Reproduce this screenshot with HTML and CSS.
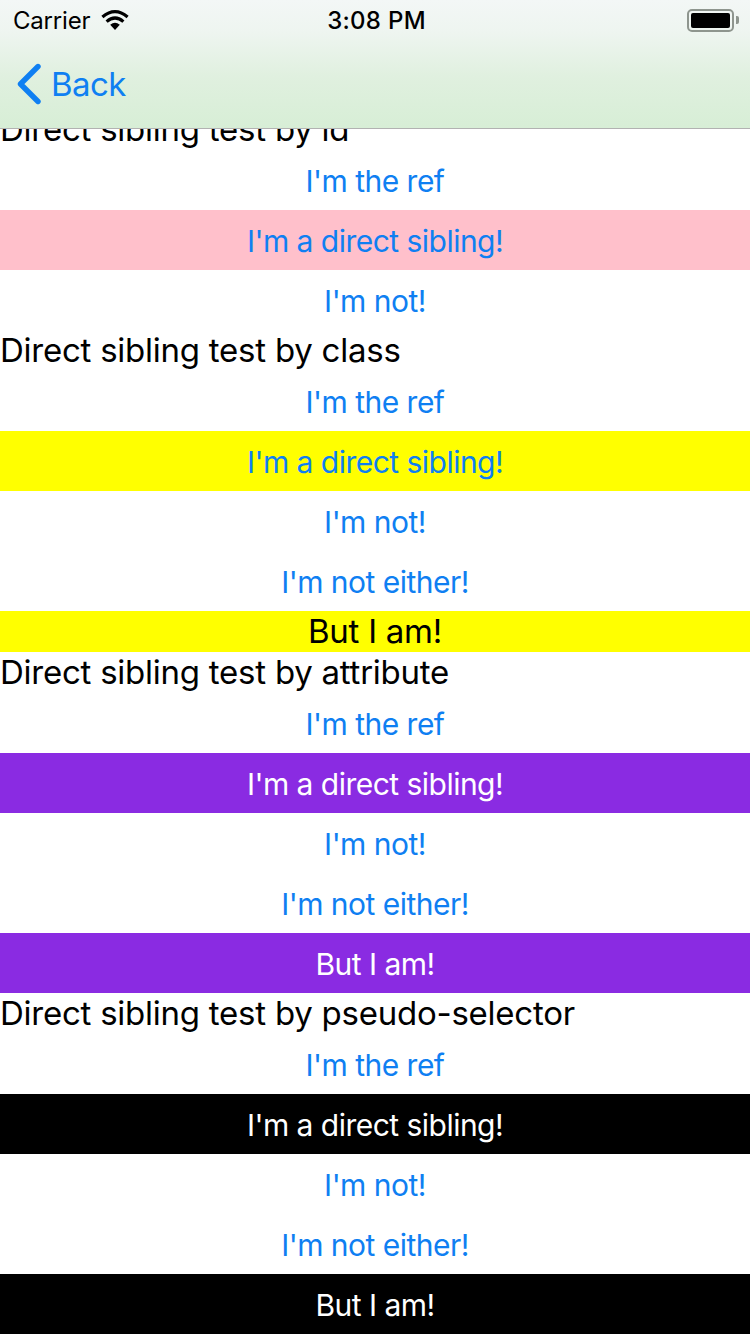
FILE: index.html
```html
<!DOCTYPE html>
<html lang="en">
<head>
    <meta charset="UTF-8">
    <meta name="viewport" content="width=device-width, initial-scale=1.0">
    <title>Direct sibling tests</title>
    <link rel="stylesheet" href="styles.css">
</head>
<body>
    <header class="nav">
        <div class="status">
            <div class="status-left">
                <span class="carrier">Carrier</span>
                <svg class="wifi" width="30" height="22" viewBox="0 0 30 22">
                    <path d="M15 21 L10.2 15.8 Q15 11.6 19.8 15.8 Z" fill="#000"/>
                    <path d="M6.6 12.6 Q15 5.4 23.4 12.6" fill="none" stroke="#000" stroke-width="3.2"/>
                    <path d="M2.4 8 Q15 -2.6 27.6 8" fill="none" stroke="#000" stroke-width="3.2"/>
                </svg>
            </div>
            <span class="time">3:08 PM</span>
            <div class="battery">
                <div class="battery-body"><div class="battery-fill"></div></div>
                <div class="battery-tip"></div>
            </div>
        </div>
        <div class="navbar">
            <svg class="chevron" width="26" height="42" viewBox="0 0 26 42">
                <path d="M22 3.5 L4.5 21 L22 38.5" fill="none" stroke="#0f7ff2" stroke-width="5.4" stroke-linecap="round" stroke-linejoin="round"/>
            </svg>
            <span class="back">Back</span>
        </div>
    </header>

    <main class="content">
        <div class="title">Direct sibling test by id</div>
        <div class="btn">I'm the ref</div>
        <div class="btn pink">I'm a direct sibling!</div>
        <div class="btn">I'm not!</div>

        <div class="title">Direct sibling test by class</div>
        <div class="btn">I'm the ref</div>
        <div class="btn yellow">I'm a direct sibling!</div>
        <div class="btn">I'm not!</div>
        <div class="btn">I'm not either!</div>
        <div class="title center yellow">But I am!</div>

        <div class="title">Direct sibling test by attribute</div>
        <div class="btn">I'm the ref</div>
        <div class="btn purple">I'm a direct sibling!</div>
        <div class="btn">I'm not!</div>
        <div class="btn">I'm not either!</div>
        <div class="btn purple">But I am!</div>

        <div class="title">Direct sibling test by pseudo-selector</div>
        <div class="btn">I'm the ref</div>
        <div class="btn black">I'm a direct sibling!</div>
        <div class="btn">I'm not!</div>
        <div class="btn">I'm not either!</div>
        <div class="btn black">But I am!</div>
    </main>
</body>
</html>
```

FILE: styles.css
```css
html, body { margin: 0; padding: 0; }
body { width: 750px; height: 1334px; overflow: hidden; position: relative; background: #fff; font-family: Inter, "Liberation Sans", sans-serif; color: #000; }

.nav { position: absolute; top: 0; left: 0; width: 750px; height: 129px; box-sizing: border-box; border-bottom: 1px solid #b2b2b2; background: linear-gradient(180deg, #f3f7f6 0%, #eef5f0 25%, #e0f0df 60%, #d7eed6 100%); }
.status { height: 40px; display: flex; align-items: center; justify-content: space-between; position: relative; padding: 0 11px 0 13px; }
.status-left { display: flex; align-items: center; gap: 10px; }
.carrier { font-size: 24px; letter-spacing: -0.2px; }
.time { font-size: 24px; font-weight: 500; position: absolute; left: 3px; right: 0; text-align: center; letter-spacing: 0.3px; }
.battery { display: flex; align-items: center; gap: 2px; }
.battery-body { width: 47px; height: 23px; box-sizing: border-box; border: 2px solid #8e958e; border-radius: 5px; padding: 2px; }
.battery-fill { height: 100%; background: #000; border-radius: 2px; }
.battery-tip { width: 3px; height: 8px; background: #8e958e; border-radius: 0 2px 2px 0; }

.navbar { height: 88px; display: flex; align-items: center; padding-left: 16px; gap: 9px; }
.back { font-size: 33px; letter-spacing: -0.6px; color: #0f7ff2; }

.content { padding-top: 109px; }
.title { height: 41px; line-height: 41px; font-size: 33px; letter-spacing: -0.24px; white-space: nowrap; }
.btn { height: 60px; line-height: 62px; font-size: 30px; letter-spacing: -0.52px; text-align: center; color: #0f7ff2; }
.center { text-align: center; }
.pink { background: #ffc0cb; }
.yellow { background: #ffff00; }
.purple { background: #8a2be2; color: #fff; }
.black { background: #000; color: #fff; }
```
